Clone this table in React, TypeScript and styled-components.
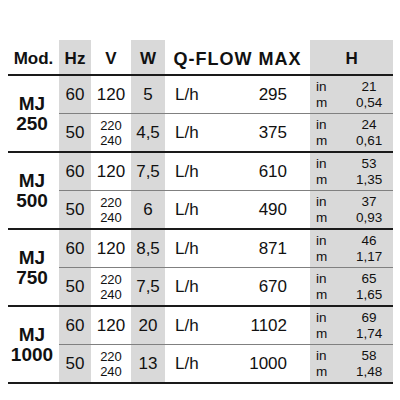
import React from 'react';
import styled, { createGlobalStyle } from 'styled-components';

const GREY = '#d9d9d9';
const THICK = '2px solid #1a1a1a';
const THIN = '1px solid #808080';

type Row = { hz: string; v: string[]; w: string; q: string; h: [string, string] };
type Group = { model: string; rows: Row[] };

const GROUPS: Group[] = [
  {
    model: '250',
    rows: [
      { hz: '60', v: ['120'], w: '5', q: '295', h: ['21', '0,54'] },
      { hz: '50', v: ['220', '240'], w: '4,5', q: '375', h: ['24', '0,61'] },
    ],
  },
  {
    model: '500',
    rows: [
      { hz: '60', v: ['120'], w: '7,5', q: '610', h: ['53', '1,35'] },
      { hz: '50', v: ['220', '240'], w: '6', q: '490', h: ['37', '0,93'] },
    ],
  },
  {
    model: '750',
    rows: [
      { hz: '60', v: ['120'], w: '8,5', q: '871', h: ['46', '1,17'] },
      { hz: '50', v: ['220', '240'], w: '7,5', q: '670', h: ['65', '1,65'] },
    ],
  },
  {
    model: '1000',
    rows: [
      { hz: '60', v: ['120'], w: '20', q: '1102', h: ['69', '1,74'] },
      { hz: '50', v: ['220', '240'], w: '13', q: '1000', h: ['58', '1,48'] },
    ],
  },
];

const GlobalStyle = createGlobalStyle`
  html, body {
    margin: 0;
    padding: 0;
    background: #fff;
  }
  body {
    font-family: "Liberation Sans", Arial, sans-serif;
    color: #111;
  }
`;

const Page = styled.div`
  width: 400px;
  height: 400px;
  padding: 40px 0 0 8px;
  box-sizing: border-box;
`;

const Table = styled.table`
  width: 385px;
  border-collapse: collapse;
  table-layout: fixed;
  font-size: 17px;
`;

const Head = styled.th<{ $shaded?: boolean; $spaced?: boolean }>`
  height: 30px;
  padding: 4px 0 0;
  background: ${(p) => (p.$shaded ? GREY : 'transparent')};
  border-bottom: ${THICK};
  font-weight: 700;
  text-align: center;
  vertical-align: middle;
  letter-spacing: ${(p) => (p.$spaced ? '1px' : '0')};
  font-size: ${(p) => (p.$spaced ? '18px' : '17px')};
  white-space: nowrap;
`;

const ModelCell = styled.td`
  padding: 0 3px 0 0;
  border-bottom: ${THICK};
  font-size: 19px;
  font-weight: 700;
  text-align: center;
  vertical-align: middle;
  line-height: 20px;
`;

const Cell = styled.td<{ $shaded?: boolean; $last?: boolean; $align?: 'left' | 'center' | 'right' }>`
  height: 37px;
  padding: 0;
  background: ${(p) => (p.$shaded ? GREY : 'transparent')};
  border-bottom: ${(p) => (p.$last ? THICK : THIN)};
  text-align: ${(p) => p.$align ?? 'center'};
  vertical-align: middle;
  white-space: nowrap;
`;

const Unit = styled(Cell)`
  padding-left: 10px;
`;

const Flow = styled(Cell)`
  padding-right: 23px;
`;

const Stack = styled.div`
  font-size: 13px;
  line-height: 15px;
`;

const Height = styled.div`
  display: flex;
  justify-content: space-between;
  align-items: center;
  padding: 0 4px 0 6px;
  font-size: 13.5px;
  line-height: 15.5px;
`;

const Labels = styled.div`
  text-align: left;
`;

const Values = styled.div`
  width: 40px;
  text-align: center;
`;

export default function App() {
  return (
    <>
      <GlobalStyle />
      <Page>
        <Table>
          <colgroup>
            <col style={{ width: 51 }} />
            <col style={{ width: 32 }} />
            <col style={{ width: 40 }} />
            <col style={{ width: 34 }} />
            <col style={{ width: 32 }} />
            <col style={{ width: 113 }} />
            <col style={{ width: 83 }} />
          </colgroup>
          <thead>
            <tr>
              <Head>Mod.</Head>
              <Head $shaded>Hz</Head>
              <Head>V</Head>
              <Head $shaded>W</Head>
              <Head colSpan={2} $spaced>
                Q-FLOW MAX
              </Head>
              <Head $shaded>H</Head>
            </tr>
          </thead>
          <tbody>
            {GROUPS.map((g) =>
              g.rows.map((r, i) => {
                const last = i === g.rows.length - 1;
                return (
                  <tr key={g.model + r.hz}>
                    {i === 0 && (
                      <ModelCell rowSpan={g.rows.length}>
                        MJ
                        <br />
                        {g.model}
                      </ModelCell>
                    )}
                    <Cell $shaded $last={last}>
                      {r.hz}
                    </Cell>
                    <Cell $last={last}>
                      {r.v.length > 1 ? (
                        <Stack>
                          {r.v[0]}
                          <br />
                          {r.v[1]}
                        </Stack>
                      ) : (
                        r.v[0]
                      )}
                    </Cell>
                    <Cell $shaded $last={last}>
                      {r.w}
                    </Cell>
                    <Unit $last={last} $align="left">
                      L/h
                    </Unit>
                    <Flow $last={last} $align="right">
                      {r.q}
                    </Flow>
                    <Cell $shaded $last={last}>
                      <Height>
                        <Labels>
                          in
                          <br />m
                        </Labels>
                        <Values>
                          {r.h[0]}
                          <br />
                          {r.h[1]}
                        </Values>
                      </Height>
                    </Cell>
                  </tr>
                );
              })
            )}
          </tbody>
        </Table>
      </Page>
    </>
  );
}
